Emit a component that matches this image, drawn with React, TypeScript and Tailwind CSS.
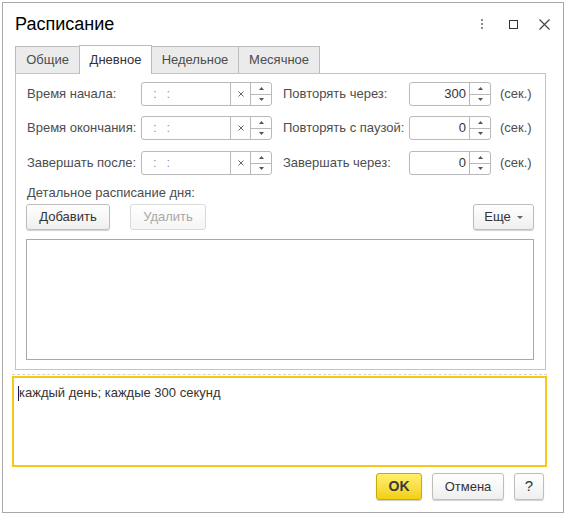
import React from "react";

const font = { fontFamily: '"Liberation Sans", Arial, sans-serif' };

const Spinner: React.FC = () => (
  <div className="flex flex-col w-[21px] h-full border-l border-[#b9b9b9]">
    <div className="flex-1 flex items-center justify-center border-b border-[#b9b9b9]">
      <svg width="5" height="3" viewBox="0 0 5 3">
        <path d="M0 3 L2.5 0 L5 3 Z" fill="#555" />
      </svg>
    </div>
    <div className="flex-1 flex items-center justify-center">
      <svg width="5" height="3" viewBox="0 0 5 3">
        <path d="M0 0 L2.5 3 L5 0 Z" fill="#555" />
      </svg>
    </div>
  </div>
);

const TimeInput: React.FC = () => (
  <div className="flex w-[131px] h-[24px] border border-[#b9b9b9] rounded-[3px] bg-white">
    <div className="w-[89px] flex items-center pl-[11px] text-[13px] text-[#8a9ab0] tracking-[10px]">
      ::
    </div>
    <div className="w-[20px] flex items-center justify-center border-l border-[#b9b9b9]">
      <svg width="6" height="6" viewBox="0 0 6 6">
        <path d="M0.5 0.5 L5.5 5.5 M5.5 0.5 L0.5 5.5" stroke="#666" strokeWidth="1" />
      </svg>
    </div>
    <Spinner />
  </div>
);

const NumInput: React.FC<{ value: string }> = ({ value }) => (
  <div className="flex w-[82px] h-[24px] border border-[#b9b9b9] rounded-[3px] bg-white">
    <div className="flex-1 flex items-center justify-end pr-[3px] text-[13px] text-[#333]">{value}</div>
    <Spinner />
  </div>
);

const rows = [
  { left: "Время начала:", right: "Повторять через:", value: "300" },
  { left: "Время окончания:", right: "Повторять с паузой:", value: "0" },
  { left: "Завершать после:", right: "Завершать через:", value: "0" },
];

const tabs = [
  { name: "Общие", w: "w-[65px]", active: false },
  { name: "Дневное", w: "w-[73px]", active: true },
  { name: "Недельное", w: "w-[88px]", active: false },
  { name: "Месячное", w: "w-[82px]", active: false },
];

const btn =
  "h-[26px] flex items-center justify-center rounded-[3px] border border-[#bdbdbd] bg-gradient-to-b from-white to-[#efefef] shadow-[0_1px_1px_rgba(0,0,0,0.18)] text-[13px] text-[#333]";

export default function App() {
  return (
    <div className="w-[566px] h-[515px] bg-white pl-[2px] pt-[2px]" style={font}>
      <div className="w-[562px] h-[511px] border border-[#a8a8a8] flex flex-col bg-white">
        {/* Header */}
        <div className="h-[42px] flex items-center pl-[12px] pr-[13px]">
          <div className="text-[18px] leading-[21px] text-black flex-1">Расписание</div>
          <div className="flex items-center">
            <div className="flex flex-col gap-[2px] mr-[26px]">
              <span className="w-[2px] h-[2px] bg-[#8c8c8c]" />
              <span className="w-[2px] h-[2px] bg-[#8c8c8c]" />
              <span className="w-[2px] h-[2px] bg-[#8c8c8c]" />
            </div>
            <div className="w-[9px] h-[9px] border-[1.5px] border-[#333] mr-[21px]" />
            <svg width="11" height="11" viewBox="0 0 11 11">
              <path d="M0.5 0.5 L10.5 10.5 M10.5 0.5 L0.5 10.5" stroke="#444" strokeWidth="1.2" />
            </svg>
          </div>
        </div>

        {/* Tabs */}
        <div className="h-[28px] flex items-end ml-[12px]">
          {tabs.map((t, i) => (
            <div
              key={t.name}
              className={
                t.active
                  ? `${t.w} h-[29px] -mb-px relative z-10 bg-white border border-b-0 border-[#bcbcbc] flex items-center justify-center text-[13px] text-[#333] ${i > 0 ? "-ml-px" : ""}`
                  : `${t.w} h-[27px] bg-[#ebebeb] border border-b-0 border-[#bcbcbc] flex items-center justify-center text-[13px] text-[#4d4d4d] ${i > 0 ? "-ml-px" : ""}`
              }
            >
              {t.name}
            </div>
          ))}
        </div>

        {/* Panel */}
        <div className="ml-[12px] w-[531px] h-[297px] border border-[#c4c4c4] pt-[8px] pl-[10px] pr-[11px] flex flex-col">
          {rows.map((r, i) => (
            <div
              key={r.left}
              className={`flex items-center h-[24px] ${i === 1 ? "mt-[10px]" : ""} ${i === 2 ? "mt-[11px]" : ""}`}
            >
              <div className="w-[115px] pl-[1px] text-[13px] text-[#4d4d4d] whitespace-nowrap">{r.left}</div>
              <TimeInput />
              <div className="w-[126px] ml-[11px] text-[13px] text-[#4d4d4d] whitespace-nowrap">{r.right}</div>
              <NumInput value={r.value} />
              <div className="ml-[9px] text-[13px] text-[#4d4d4d]">(сек.)</div>
            </div>
          ))}

          <div className="mt-[10px] h-[16px] leading-[16px] pl-[1px] text-[13px] text-[#4d4d4d]">
            Детальное расписание дня:
          </div>

          <div className="mt-[3px] flex items-center">
            <div className={`${btn} w-[84px]`}>Добавить</div>
            <div className="ml-[20px] w-[76px] h-[26px] flex items-center justify-center rounded-[3px] border border-[#dadada] bg-gradient-to-b from-white to-[#f5f5f5] text-[13px] text-[#a8a8a8]">
              Удалить
            </div>
            <div className={`${btn} ml-auto w-[61px] gap-[6px]`}>
              <span>Еще</span>
              <svg width="6" height="3" viewBox="0 0 6 3">
                <path d="M0 0 L3 3 L6 0 Z" fill="#666" />
              </svg>
            </div>
          </div>

          <div className="mt-[9px] h-[121px] border border-[#a9a9a9] bg-white" />
        </div>

        {/* Dashed separator */}
        <div className="ml-[9px] w-[535px] mt-[4px] border-t border-dashed border-[#d2d2d2]" />

        {/* Description */}
        <div className="ml-[9px] mt-[1px] w-[535px] h-[91px] border-2 border-[#f7c815] pl-[4px] pt-[7px]">
          <div className="flex items-center h-[16px] text-[13px] text-[#333]">
            <span className="w-px h-[15px] bg-[#1a1a4a]" />
            <span>каждый день; каждые 300 секунд</span>
          </div>
        </div>

        {/* Footer buttons */}
        <div className="mt-[6px] ml-[9px] w-[532px] flex justify-end gap-[10px]">
          <div className="w-[46px] h-[27px] flex items-center justify-center rounded-[3px] border border-[#c9ab00] bg-gradient-to-b from-[#fff06a] to-[#f2cf00] shadow-[0_1px_1px_rgba(0,0,0,0.2)] text-[14px] font-bold text-[#3a3a3a]">
            OK
          </div>
          <div className={`${btn} h-[27px] w-[72px]`}>Отмена</div>
          <div className={`${btn} h-[27px] w-[30px] text-[15px]`}>?</div>
        </div>
      </div>
    </div>
  );
}
